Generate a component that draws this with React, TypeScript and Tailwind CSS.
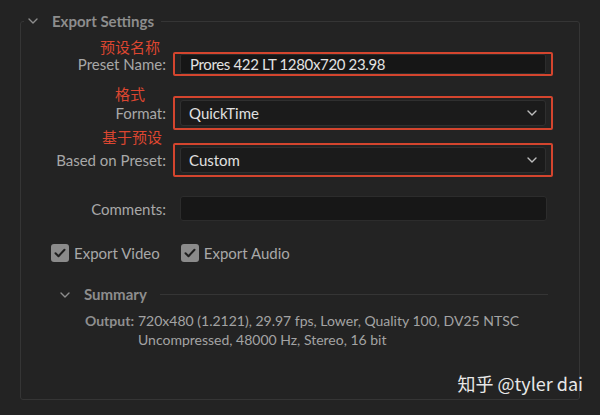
import React from "react";

const Chevron = ({ className = "" }: { className?: string }) => (
  <svg className={className} width="10" height="6" viewBox="0 0 10 6" fill="none">
    <path d="M1 1l4 4 4-4" stroke="currentColor" strokeWidth="1.4" strokeLinecap="round" strokeLinejoin="round" />
  </svg>
);

const Check = () => (
  <span className="w-[18px] h-[18px] rounded-[3px] bg-[#8b8b8b] flex items-center justify-center">
    <svg width="12" height="10" viewBox="0 0 12 10" fill="none">
      <path d="M1.5 5.2l3 3L10.5 1.8" stroke="#1f1f1f" strokeWidth="2" strokeLinecap="round" strokeLinejoin="round" />
    </svg>
  </span>
);

function Label({ text, note, noteClass }: { text: string; note?: string; noteClass?: string }) {
  return (
    <div className="relative flex justify-end">
      {note && (
        <span
          className={`absolute bottom-full text-[15px] leading-[15px] text-[#dc4630] font-['Noto_Sans_CJK_SC',sans-serif] ${noteClass}`}
        >
          {note}
        </span>
      )}
      <span className="text-[15px] leading-4 text-[#a8a8a8]">{text}</span>
    </div>
  );
}

function Select({ value }: { value: string }) {
  return (
    <div className="border-2 border-[#d4452e] rounded-[2px] px-[5px] py-[2px]">
      <div className="h-[26px] bg-[#1b1b1b] border border-[#2f2f2f] rounded-[3px] flex items-center justify-between pl-[8px] pr-[8px]">
        <span className="text-[15px] text-[#e0e0e0]">{value}</span>
        <Chevron className="text-[#bdbdbd]" />
      </div>
    </div>
  );
}

export default function App() {
  return (
    <div className="w-[600px] h-[415px] bg-[#232323] relative overflow-hidden pt-[11px] font-['Lato',sans-serif]">
      <fieldset className="mx-[20px] h-[389px] border border-[#353535] rounded-[3px]">
        <legend className="ml-[3px] pl-[4px] pr-[7px] h-[20px] flex items-center">
          <Chevron className="text-[#8d8d8d]" />
          <span className="ml-[14px] text-[15px] font-bold text-[#8d8d8d]">Export Settings</span>
        </legend>

        {/* Preset name */}
        <div className="grid grid-cols-[145px_380px] gap-x-[7px] items-center mt-[21px]">
          <Label text="Preset Name:" note="预设名称" noteClass="right-[6px] mb-[2px]" />
          <div className="border-2 border-[#d4452e] rounded-[2px] px-[5px]">
            <div className="h-[20px] bg-[#161616] border border-[#2c2c2c] rounded-[2px] flex items-center pl-[9px]">
              <span className="text-[15px] tracking-[-0.35px] text-[#e2e2e2]">Prores 422 LT 1280x720 23.98</span>
            </div>
          </div>
        </div>

        {/* Format */}
        <div className="grid grid-cols-[145px_380px] gap-x-[7px] items-center mt-[20px]">
          <Label text="Format:" note="格式" noteClass="right-[21px] mb-[4px]" />
          <Select value="QuickTime" />
        </div>

        {/* Based on preset */}
        <div className="grid grid-cols-[145px_380px] gap-x-[7px] items-center mt-[13px]">
          <Label text="Based on Preset:" note="基于预设" noteClass="right-[4px] mb-[8px]" />
          <Select value="Custom" />
        </div>

        {/* Comments */}
        <div className="grid grid-cols-[145px_380px] gap-x-[7px] items-center mt-[19px]">
          <Label text="Comments:" />
          <div className="ml-[7px] w-[367px] h-[25px] bg-[#171717] border border-[#2c2c2c] rounded-[3px]" />
        </div>

        {/* Export toggles */}
        <div className="flex items-center mt-[21px] pl-[30px] gap-[21px]">
          <label className="flex items-center gap-[5px]">
            <Check />
            <span className="text-[15px] text-[#a8a8a8]">Export Video</span>
          </label>
          <label className="flex items-center gap-[5px]">
            <Check />
            <span className="text-[15px] text-[#a8a8a8]">Export Audio</span>
          </label>
        </div>

        {/* Summary */}
        <div className="flex items-center mt-[20px] pl-[39px] pr-[31px] h-[20px]">
          <Chevron className="text-[#8d8d8d]" />
          <span className="ml-[14px] text-[15px] font-bold text-[#8d8d8d]">Summary</span>
          <div className="flex-1 h-px bg-[#353535] ml-[13px]" />
        </div>

        <div className="flex mt-[6px] pl-[64px] text-[14px] leading-[19px] text-[#a3a3a3]">
          <span className="font-bold text-[#8f8f8f] mr-[4px]">Output:</span>
          <div>
            <div>720x480 (1.2121), 29.97 fps, Lower, Quality 100, DV25 NTSC</div>
            <div>Uncompressed, 48000 Hz, Stereo, 16 bit</div>
          </div>
        </div>
      </fieldset>

      <div className="absolute right-[17px] top-[372px] text-[18px] leading-[22px] text-[#e8e8e8] font-['Noto_Sans_CJK_SC',sans-serif]">
        知乎 @tyler dai
      </div>
    </div>
  );
}
